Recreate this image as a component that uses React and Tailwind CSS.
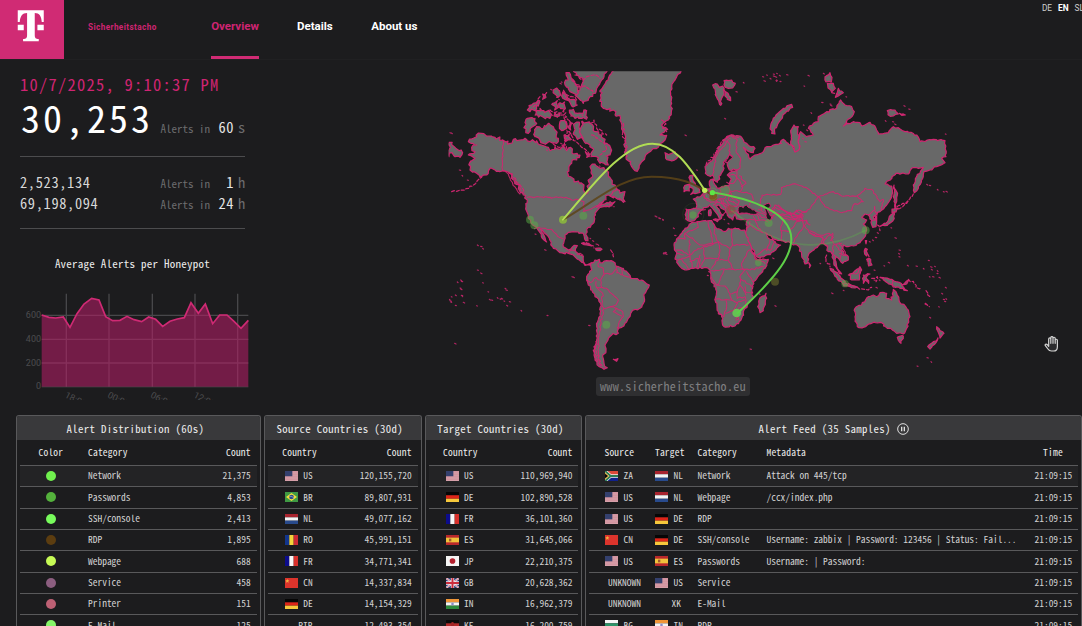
import React from "react";

/* ---------- world map geometry ---------- */
/* Points are kept in survey tiles; each tile has an offset on the shared sheet. */
const TILES = { A: [0, 0], B: [480, 0], C: [720, 195], E: [990, 0], F: [0, 420], G: [630, 420], H: [1080, 420] };

function points(src) {
  const out = [];
  let off = TILES.A;
  src.trim().split(/\s+/).forEach((tok) => {
    if (TILES[tok]) off = TILES[tok];
    else {
      const [x, y] = tok.split(",").map(Number);
      out.push([x + off[0], y + off[1]]);
    }
  });
  return out;
}

function noise(n) {
  const s = Math.sin(n * 127.1 + 11.7) * 43758.5453;
  return s - Math.floor(s) - 0.5;
}

function outline(src, closed, rough) {
  const pts = points(src);
  const n = pts.length;
  const res = [];
  for (let i = 0; i < n; i++) {
    const p = pts[i];
    res.push(p);
    if (i === n - 1 && !closed) break;
    const q = pts[(i + 1) % n];
    const len = Math.hypot(q[0] - p[0], q[1] - p[1]);
    const steps = Math.floor(len / 6);
    // the arctic coast of America is far more broken than the rest
    const r = closed && p[0] < 560 && p[1] < 440 && p[1] > 60 ? rough * 1.7 : rough;
    for (let k = 1; k < steps; k++) {
      const t = k / steps;
      const a = noise(p[0] * 3.1 + p[1] * 1.7 + k * 5.3) * r;
      const b = noise(q[0] * 2.3 + q[1] * 4.1 + k * 9.7) * r;
      res.push([p[0] + (q[0] - p[0]) * t + a, p[1] + (q[1] - p[1]) * t + b]);
    }
  }
  return "M" + res.map((p) => p[0].toFixed(1) + " " + p[1].toFixed(1)).join("L") + (closed ? "Z" : "");
}

const LAND = [
  // North and Central America
  "A 85,245 100,235 125,220 145,228 165,232 188,240 210,250 220,238 240,240 255,235 270,245 290,242 300,255 325,262 330,272 345,260 360,268 372,256 380,272 392,262 400,282 420,285 410,300 395,310 382,335 385,345 410,365 432,375 435,402 446,390 445,360 458,345 450,320 465,312 480,325 495,330 505,345 515,360 525,375 530,385 545,400 555,425 540,420 528,405 505,405 492,420 470,442 500,428 525,425 515,435 500,438 F 480,22 465,40 460,70 440,88 437,102 444,122 437,122 430,100 400,95 375,105 370,140 385,150 398,140 412,137 406,152 420,165 430,168 430,185 440,195 455,188 452,196 435,196 418,180 400,165 385,160 360,158 340,145 325,110 302,88 320,126 312,120 294,90 283,78 265,55 258,20 262,0 A 250,405 235,385 225,360 210,340 190,332 165,330 150,325 140,345 120,352 110,340 90,330 88,310 105,295 85,285 105,275 95,262 110,255",
  // South America
  "F 440,230 455,210 452,190 465,180 478,178 480,188 500,182 520,185 530,200 550,205 565,220 572,235 605,240 628,255 615,280 610,310 600,325 575,335 570,350 555,370 545,382 532,382 535,400 515,405 505,415 495,435 498,455 488,470 492,490 502,503 492,508 478,500 465,480 462,450 470,420 470,380 480,340 482,310 465,290 445,255 440,240",
  // Greenland
  "B 45,25 20,62 0,95 5,125 10,145 40,150 62,175 70,215 75,250 78,290 95,320 112,334 122,310 135,290 155,270 175,262 195,240 200,226 180,225 203,208 185,195 205,180 215,150 212,100 215,80 225,60 245,25",
  // Canadian arctic
  "A 400,25 505,25 485,60 470,85 450,110 430,130 405,105 420,90 430,60 410,45",
  "A 378,38 388,38 400,60 415,80 410,105 390,95 375,75 385,60",
  "A 425,185 450,190 465,215 485,225 500,250 515,270 510,285 498,288 505,315 480,310 470,290 455,290 460,270 450,255 430,240 422,225",
  "A 405,190 418,186 420,210 430,235 412,238 402,215",
  "A 290,200 310,205 325,190 340,200 355,235 350,250 330,245 310,250 285,230",
  "A 258,178 285,175 290,190 265,220 255,205",
  "A 262,150 280,130 298,122 290,145 270,155",
  "A 285,165 300,145 312,152 330,158 330,175 310,172",
  "A 388,150 400,148 412,160 440,152 442,172 405,175 392,168",
  "A 340,90 350,84 362,105 350,112", "A 368,98 380,104 378,120 368,115",
  "A 338,130 352,122 356,142 344,150", "A 360,128 374,126 374,148 362,146",
  "A 360,185 375,182 380,205 365,212 358,198", "A 388,182 398,190 392,210 384,200",
  "A 380,120 400,118 412,135 395,138", "A 308,102 320,98 318,112 308,118",
  "A 345,158 360,160 358,168 342,168", "A 372,225 388,222 390,240 376,245", "A 436,275 448,282 440,292",
  "A 510,408 530,388 540,400 555,395 553,424 535,418",
  // Chukotka across the antimeridian
  "A 27,247 45,262 68,278 60,292 45,290 36,278 27,290",
  // Iceland, Britain, Ireland
  "B 195,278 206,284 225,275 235,290 215,303 197,295",
  "C 30,152 40,150 38,162 46,180 58,192 60,202 45,206 32,208 40,196 28,180",
  "C 14,182 26,178 28,198 12,200",
  // Eurasia
  "B 400,225 425,232 440,250 465,265 460,278 440,270 430,262 440,280 450,297 465,285 490,275 500,260 520,255 545,250 E 30,250 40,238 65,255 75,275 88,265 85,240 92,215 110,230 130,225 115,205 130,190 145,185 145,170 170,155 200,145 212,120 225,135 245,140 253,155 240,175 220,198 250,185 270,188 275,198 300,187 318,205 325,222 355,218 370,200 385,203 405,215 440,225 450,245 490,238 525,242 528,290 515,295 525,308 500,320 480,330 462,335 458,355 445,385 433,398 430,375 440,350 460,322 445,325 425,325 415,342 378,340 345,372 365,378 365,410 350,435 330,455 310,470 318,480 H 225,45 230,60 228,80 218,82 215,60 205,45 195,42 185,52 200,60 190,72 200,90 195,110 180,128 160,138 140,140 130,135 125,150 145,170 145,180 128,190 118,178 108,170 105,180 112,205 125,222 118,220 102,195 98,165 92,155 85,155 78,135 65,130 45,145 25,165 22,190 15,192 5,165 G 445,138 430,135 420,128 395,122 375,118 355,105 345,98 360,118 375,125 392,135 370,155 330,175 320,170 300,130 285,100 290,90 C 202,285 170,282 165,265 158,285 148,278 138,262 122,248 118,240 108,242 120,260 130,270 118,284 112,268 98,250 88,240 70,248 58,262 55,275 45,285 25,288 17,282 18,252 48,250 48,230 40,222 58,216 68,208 76,196 90,192 88,170 98,162 104,178 118,190 135,182 148,180 154,162 142,150 150,142 172,135 160,132 148,135 142,120 146,105 158,95 150,88 142,100 130,112 132,130 122,150 112,172 102,165 98,150 86,152 76,145 75,125 88,112 105,92 118,65 130,45 148,32",
  // Africa, Madagascar
  "G 125,68 150,65 185,62 195,80 225,95 235,85 285,90 290,110 305,145 320,180 355,178 345,205 310,245 305,270 310,290 285,325 275,355 255,378 222,380 215,350 205,335 195,300 200,275 182,235 180,210 165,202 130,205 110,210 90,200 75,175 80,160 72,135 90,105 105,85",
  "G 348,280 350,295 340,332 330,338 323,320 328,298",
  // Arctic Russia and Svalbard
  "B 338,75 352,72 358,82 368,78 372,95 365,115 362,136 350,112",
  "B 372,62 395,60 406,70 398,84 385,85 372,74", "B 370,90 384,100 392,122 382,118",
  "E 65,133 68,142 45,160 28,185 14,205 15,222 5,220 2,198 18,165 40,145",
  "E 72,195 85,200 86,235 88,268 75,276 62,245 62,212",
  "E 165,50 180,38 186,52 184,66 168,66", "E 172,70 190,70 196,85 185,96 174,84",
  "E 205,85 220,98 205,108 196,112", "E 352,152 375,150 385,162 370,168 354,164", "E 388,160 406,165 395,166",
  // Sakhalin and Japan
  "E 372,375 382,405 375,445 370,410", "E 366,447 385,445 378,456 366,458",
  "H 283,35 280,60 262,76 240,79 262,66 272,45",
  // South-east Asia
  "H 90,205 100,208 120,228 136,246 132,256 112,238", "H 130,251 150,254 172,261 165,264 132,258",
  "H 145,225 160,218 180,200 185,210 178,240 155,240", "H 190,225 210,222 198,232 206,250 196,240 190,250",
  "H 240,232 275,238 300,248 322,272 300,265 285,262 262,248", "H 196,145 202,148 200,168 194,162",
  "H 200,178 212,178 216,195 206,198", "H 196,122 200,122 198,132", "G 476,188 482,196 478,203",
  "H 305,255 320,243 326,240 320,252",
  // Australia, Tasmania, New Zealand
  "H 165,325 185,315 205,290 220,285 230,290 240,278 260,280 258,295 275,300 280,268 288,275 298,305 320,325 330,350 320,385 310,402 290,400 272,385 262,385 245,368 215,370 190,382 172,380 165,350",
  "H 292,412 310,408 303,430", "H 410,380 420,392 432,400 420,414 416,400", "H 414,414 408,428 390,447 383,440 400,425",
  // Mediterranean and Caribbean islands
  "C 100,284 116,284 112,290", "C 86,256 92,254 92,272 86,272", "F 425,130 445,130 455,138 440,135", "F 467,145 486,148 480,152 468,150",
  "F 520,478 534,476 530,484",
];

const SEAS = [
  "C 174,256 178,244 190,248 200,240 212,250 236,262 228,268 200,264 178,266",
  "C 252,240 268,234 272,244 262,254 275,276 270,288 260,280 258,262",
  "C 148,90 158,96 144,112 136,112",
];

const BORDERS = [
  "A 188,240 188,332 205,342 218,372 240,402", "A 262,412 378,412 395,420 420,418 432,425 430,455 F 462,22 490,5",
  "F 283,86 302,84 335,88 352,108 370,116", "F 385,160 392,150 404,152", "F 412,164 420,160 428,165",
  "F 478,182 475,200 490,205 492,225 482,240 485,262 470,262 468,245", "F 440,240 452,248 468,232 478,240",
  "F 492,222 515,222 528,208", "F 530,200 530,218 570,232", "F 545,205 547,222",
  "F 485,262 505,270 520,285 535,300 528,315 512,320 492,326 486,310 488,280 470,262",
  "F 512,320 530,325 548,335 550,350 538,365 535,380", "F 492,326 485,350 478,400 474,450 478,488",
  "F 530,325 520,335 545,348",
  // Europe
  "C 150,40 138,55 120,75 108,95 104,120 98,148", "C 158,38 172,45 168,75 182,105 180,130 168,136",
  "C 130,46 145,52 150,60 148,90", "C 170,136 170,160 160,175 140,172", "C 146,152 165,150 178,165 188,185 178,200 150,198 145,182",
  "C 118,190 122,205 98,200 90,212 108,225 135,220 150,200", "C 96,195 78,205 72,218 92,232 112,230 100,240",
  "C 150,200 155,218 178,228 170,244 150,240 138,225", "C 108,226 130,238 150,258 160,262", "C 50,252 62,254 76,254",
  "C 180,200 205,205 215,208 220,225 208,240", "C 132,240 138,253 130,268", "C 26,256 25,284",
  "C 184,185 198,175 178,152", "C 118,222 125,235 145,240 150,252", "C 140,205 150,212 145,225 160,232", "C 120,210 138,212 148,205",
  "C 66,208 75,220 90,225", "C 88,192 86,208", "C 146,240 150,262 165,258 172,258", "C 160,230 175,240", "C 130,225 130,238",
  // Middle and Central Asia
  "C 245,255 240,238 246,210 280,208 302,208 304,188 345,176 E 108,382 145,410 110,455 70,470 40,450 15,435 0,460",
  "E 145,410 190,395 215,408 262,408 280,425 250,435 245,452 215,458 180,448 165,440 145,410", "E 262,408 285,385 305,388 330,425 340,418 335,450",
  "E 110,455 85,450 68,462 95,472 H 0,45 15,80 30,100 60,110 72,120 98,100", "E 0,478 20,460 55,470 80,480",
  "C 172,262 180,268 205,266 230,268 240,285 262,290", "G 300,65 290,90", "G 310,50 320,70 338,98", "G 300,75 320,90 340,98",
  "C 232,262 245,265 258,272", "C 235,268 245,278 256,276", "C 202,285 225,285 240,285", "C 275,255 300,270 330,262 340,280 370,275",
  "G 322,165 340,150 365,148 375,125", "G 350,152 360,120", "G 325,28 345,38", "G 362,48 385,42 400,55 392,90 395,122",
  "G 400,55 430,60 445,50 430,40 400,30 375,22 365,40", "G 395,92 420,95 440,65 455,60", "G 430,128 440,110 455,90 470,60",
  "G 425,42 440,30 460,45 440,62", "G 385,15 400,30 425,45", "G 440,60 470,62 480,75",
  "H 30,98 45,108 68,112 66,130", "H 72,120 70,130 82,140", "H 98,100 95,120 105,135 125,130", "H 100,135 98,160 108,170",
  "H 108,132 125,160 120,178", "H 118,128 132,150 142,168", "H 118,160 138,166", "H 278,240 280,262", "H 148,222 168,222 182,205",
  "H 30,92 50,102 70,106", "H 72,105 88,100 100,112 92,122", "H 205,45 225,30", "H 216,62 228,60",
  // Africa
  "G 105,100 145,82 142,66", "G 85,115 105,118 105,100 150,135 188,132 180,90 175,65", "G 78,150 90,150 120,165 118,120",
  "G 120,165 140,150 165,140 190,132", "G 188,132 205,125 240,145 240,170", "G 195,80 192,100 205,125", "G 245,88 248,135 295,135",
  "G 240,145 248,135", "G 240,165 235,180 250,208 280,208 275,190 298,150", "G 280,208 300,210 340,200", "G 300,150 325,180 345,190",
  "G 160,145 165,175 150,200", "G 165,175 205,175 210,150 205,125", "G 205,175 185,205", "G 210,180 235,180", "G 185,212 225,208 250,208",
  "G 222,210 210,240 200,255 185,232", "G 200,255 225,258 240,282 245,300 222,300 195,298", "G 240,282 262,275 270,255 272,225 285,210",
  "G 272,238 310,260", "G 270,255 285,275 308,278", "G 262,275 262,295 285,290 290,320", "G 245,300 262,308 285,300",
  "G 228,302 228,330 222,350 205,340", "G 228,340 250,332 262,310", "G 265,325 285,320", "G 75,178 95,178 115,208", "G 95,175 120,168 128,205",
  "G 120,185 145,175 140,203", "G 150,165 150,200", "G 80,160 100,165", "G 290,215 308,245", "G 285,260 288,285", "G 258,355 264,350 266,358 258,360",
];

/* Chains of small islands */
const CHAINS = [
  "A 35,395 50,394 62,390 78,386 90,378 105,372 112,362 125,352", "A 208,340 216,350 222,362 232,372 240,385 248,398", "A 214,342 226,355 230,368 242,378 252,400",
  "F 462,440 464,460 472,480 484,498", "F 468,425 468,450 474,475 490,500", "F 425,130 440,128 452,135 462,144", "F 512,150 520,160 522,175",
  "E 185,98 205,104", "H 325,238 342,250 360,266", "H 378,272 392,292", "H 195,150 208,172 200,185", "H 80,165 78,185 90,200",
  "H 172,262 195,268 215,262", "H 215,235 232,230 228,245", "H 292,20 308,10 325,2", "E 385,447 410,430 430,402", "H 232,75 240,92",
  "H 145,250 160,258", "A 405,45 430,60 440,50 460,45 480,55", "A 395,60 410,75 440,82 460,100", "A 380,115 370,90 390,110 410,120",
  "A 372,150 376,180 382,215 374,240 380,265", "A 330,150 350,155 372,165 385,180", "A 450,190 462,180 470,205 500,225", "A 300,110 290,130 275,145",
  "A 388,215 400,235 425,262 450,290", "A 340,252 360,262 375,255", "A 455,225 485,245 500,270 480,285",
  "B 185,180 198,192 188,205 200,215", "B 70,190 68,220 78,250 76,280", "F 495,20 510,14 522,20", "H 224,20 232,45 225,60",
  "H 376,310 388,320", "B 380,235 395,228 415,232", "C 78,120 92,105 110,80 122,55 140,36",
];

const SPECKS =
  "A 30,218 34,219 58,330 66,346 82,360 360,70 364,66 312,112 385,215 320,270 372,262 362,250 478,318 436,150 425,165 350,170 335,165 332,88 356,118 F 112,135 122,139 128,145 112,210 122,219 128,248 62,240 64,244 52,246 60,264 62,267 144,275 195,265 198,270 28,298 32,306 30,302 34,290 46,285 64,286 66,288 46,316 70,307 110,317 148,298 154,300 172,293 180,297 184,295 192,303 200,316 208,305 243,331 321,346 44,430 396,230 400,231 446,376 506,86 648,50 656,54 668,60 672,158 677,162 676,157 285,102 314,149 450,115 458,122 468,132 474,134 525,478 B 255,225 290,330 374,175 408,95 430,67 488,50 492,62 500,45 510,55 520,48 530,60 E 10,42 16,50 20,40 28,46 50,44 18,62 30,64 114,46 102,78 160,40 155,127 123,158 180,132 182,136 228,110 402,137 416,147 346,182 368,185 374,192 526,222 470,373 478,376 502,388 520,395 528,394 100,195 110,210 105,245 98,235 G 15,48 28,54 38,58 70,84 74,106 40,160 46,157 368,174 328,282 375,317 300,447 176,214 172,226 150,40 222,58 234,70 H 297,150 296,160 297,170 285,113 273,83 232,98 226,112 218,120 208,125 265,187 252,197 322,196 348,198 370,205 385,181 392,200 404,199 394,208 398,230 412,212 411,220 417,232 388,230 436,262 430,298 438,296 434,304 375,312 416,320 389,352 381,473 393,485 351,498 95,279 130,271 425,280 222,240 238,240 222,210 228,262 60,190";

function speckPath() {
  return points(SPECKS)
    .map(([x, y], i) => `M${x} ${y}l${(2 + (i % 3)).toFixed(0)} ${(i % 2) + 1}`)
    .join("");
}

function WorldMap() {
  return (
    <svg viewBox="0 0 1560 1020" className="h-[340px] w-[520px] shrink-0" fill="none">
      <defs>
        <clipPath id="sheet">
          <rect x="26" y="34" width="1520" height="980" />
        </clipPath>
      </defs>
      <g clipPath="url(#sheet)" strokeLinejoin="round" strokeLinecap="round" stroke="#cf2670">
        {LAND.map((d, i) => (
          <path key={i} d={outline(d, true, 6)} fill="#686868" strokeWidth="3.6" />
        ))}
        {BORDERS.map((d, i) => (
          <path key={i} d={outline(d, false, 5)} strokeWidth="3.3" strokeOpacity=".9" />
        ))}
        {SEAS.map((d, i) => (
          <path key={i} d={outline(d, true, 4)} fill="#1c1c1e" strokeWidth="3" />
        ))}
        {CHAINS.map((d, i) => (
          <path key={i} d={outline(d, false, 9)} strokeWidth="3.6" strokeDasharray="9 6" />
        ))}
        <path d={speckPath()} strokeWidth="3.6" strokeOpacity=".85" />
      </g>
      <g fill="#58b044" fillOpacity=".5">
        <circle cx="270" cy="479" r="12" />
        <circle cx="283" cy="496" r="12" />
        <circle cx="430" cy="467" r="12" />
        <circle cx="499" cy="794" r="12" />
        <circle cx="759" cy="465" r="11" />
        <circle cx="986" cy="489" r="12" />
        <circle cx="955" cy="608" r="10" />
        <circle cx="1277" cy="511" r="12" />
        <circle cx="1215" cy="671" r="11" />
        <circle cx="855" cy="390" r="16" fillOpacity=".3" />
        <circle cx="873" cy="450" r="14" fill="#8a4a3a" fillOpacity=".5" />
        <circle cx="1005" cy="665" r="12" fill="#62622a" fillOpacity=".7" />
        <circle cx="890" cy="759" r="13" fill="#62e84a" fillOpacity=".7" />
        <circle cx="369" cy="479" r="12" fill="#8fc038" fillOpacity=".8" />
        <circle cx="820" cy="410" r="12" fill="#7c5a1c" fillOpacity=".9" />
        <circle cx="816" cy="402" r="18" fill="none" stroke="#62c04a" strokeOpacity=".4" strokeWidth="2" />
        <circle cx="760" cy="462" r="32" fill="none" stroke="#58c044" strokeOpacity=".15" strokeWidth="2" />
      </g>
      <path d="M369 479C470 420 545 350 635 350S760 370 820 407" stroke="#5d4418" strokeOpacity=".85" strokeWidth="6" />
      <path d="M873 450C960 520 1090 610 1277 511" stroke="#58c044" strokeOpacity=".3" strokeWidth="5" />
      <path d="M369 479C470 360 555 251 637 251C705 251 750 325 794 390" stroke="#b0dc54" strokeWidth="6" strokeLinecap="round" />
      <path d="M818 397C905 412 1054 447 1054 538C1054 595 1000 660 892 760" stroke="#5ed048" strokeWidth="6" strokeLinecap="round" />
      <circle cx="794" cy="391" r="8" fill="#c0f058" />
      <circle cx="817" cy="398" r="8" fill="#5ee646" />
    </svg>
  );
}

/* ---------- honeypot chart ---------- */
const SERIES =
  "125,225 147,232 167,234 190,231 210,262 231,221 252,192 275,175 297,180 317,230 338,242 360,241 381,229 402,239 425,245 446,231 467,238 488,259 510,244 532,237 553,233 573,188 595,220 616,192 638,251 659,225 681,225 702,244 723,265 745,241";

function HoneypotChart() {
  return (
    <svg viewBox="60 150 690 329" className="block h-[109.670px] w-[230px]" fill="none">
      <g stroke="#47474a" strokeWidth="4">
        <path d="M125 226H745M125 298H745M125 369H745M199 161V441M327 161V441M457 161V441M585 161V441M713 161V441" />
      </g>
      <polygon points={`125,441 ${SERIES} 745,441`} fill="#b81c68" fillOpacity=".56" />
      <path d="M125 441H745" stroke="#47474a" strokeWidth="2" />
      <polyline points={SERIES} stroke="#cf2a74" strokeWidth="5" />
      <g fill="#4c4c4f" fontSize="27" className="font-[Roboto,sans-serif]">
        <text x="123" y="234" textAnchor="end">600</text>
        <text x="123" y="306" textAnchor="end">400</text>
        <text x="123" y="377" textAnchor="end">200</text>
        <text x="123" y="448" textAnchor="end">0</text>
        <text transform="translate(193 471) rotate(27)">18:00</text>
        <text transform="translate(321 471) rotate(27)">00:00</text>
        <text transform="translate(450 471) rotate(27)">06:00</text>
        <text transform="translate(579 471) rotate(27)">12:00</text>
      </g>
    </svg>
  );
}

/* ---------- flags ---------- */
const H3 = (a, b, c) => (
  <>
    <path fill={a} d="M0 0h39v10H0z" />
    <path fill={b} d="M0 10h39v10H0z" />
    <path fill={c} d="M0 20h39v10H0z" />
  </>
);
const V3 = (a, b, c) => (
  <>
    <path fill={a} d="M0 0h13v30H0z" />
    <path fill={b} d="M13 0h13v30H13z" />
    <path fill={c} d="M26 0h13v30H26z" />
  </>
);
const FLAGS = {
  US: (
    <>
      <path fill="#d8a2ac" d="M0 0h39v30H0z" />
      <path stroke="#c8808c" strokeWidth="1.4" d="M0 1h39M0 6h39M0 11h39M0 16h39M0 21h39M0 26h39" />
      <path fill="#34406e" d="M0 0h22v16H0z" />
    </>
  ),
  BR: (
    <>
      <path fill="#3f9a44" d="M0 0h39v30H0z" />
      <path fill="#f2dc3c" d="M19.500 3L36 15L19.500 27L3 15z" />
      <circle cx="19.500" cy="15" r="7" fill="#2a4a8c" />
      <path d="M13 13q8-1 13 4" stroke="#c8d4e0" strokeWidth="1.500" fill="none" />
    </>
  ),
  NL: H3("#a8242f", "#f4f4f4", "#284a8c"),
  RO: V3("#12358c", "#f2d43c", "#cc2b34"),
  FR: V3("#0c0c8c", "#f6f6f6", "#d8302c"),
  DE: H3("#060606", "#de2418", "#f6c83c"),
  CN: (
    <>
      <path fill="#dc342c" d="M0 0h39v30H0z" />
      <path fill="#f0b040" d="M7 3l2 4h4l-3 3 1 4-4-2-4 2 1-4-3-3h4z" />
    </>
  ),
  ES: (
    <>
      <path fill="#b8282c" d="M0 0h39v30H0z" />
      <path fill="#efc23c" d="M0 8h39v14H0z" />
      <path fill="#a05a30" d="M9 11h7v8H9z" />
    </>
  ),
  JP: (
    <>
      <path fill="#f4f4f4" d="M0 0h39v30H0z" />
      <circle cx="19.500" cy="15" r="8.500" fill="#b4202e" />
    </>
  ),
  GB: (
    <>
      <path fill="#2c3a74" d="M0 0h39v30H0z" />
      <path stroke="#ece8f0" strokeWidth="6" d="M0 0L39 30M39 0L0 30" />
      <path stroke="#c83848" strokeWidth="2" d="M0 0L39 30M39 0L0 30" />
      <path stroke="#f4f0f4" strokeWidth="10" d="M19.500 0V30M0 15H39" />
      <path stroke="#cc2c3c" strokeWidth="6" d="M19.500 0V30M0 15H39" />
    </>
  ),
  IN: (
    <>
      {H3("#f09638", "#f4f4f4", "#2c8a3c")}
      <circle cx="19.500" cy="15" r="4" fill="#8c8cc8" />
    </>
  ),
  KE: (
    <>
      {H3("#0a0a0a", "#b42828", "#1c6c34")}
      <ellipse cx="19.500" cy="15" rx="5" ry="9" fill="#a02424" />
    </>
  ),
  BG: H3("#f4f4f4", "#2c9468", "#cc3030"),
  ZA: (
    <>
      <path fill="#dc4a38" d="M0 0h39v15H0z" />
      <path fill="#10208c" d="M0 15h39v15H0z" />
      <path stroke="#f0f0f0" strokeWidth="10" d="M0 0L17 15L0 30M17 15H39" />
      <path stroke="#2c7c54" strokeWidth="6" d="M0 0L17 15L0 30M17 15H39" />
      <path fill="#e0b040" d="M0 4L13 15L0 26z" />
      <path fill="#080808" d="M0 8L9 15L0 22z" />
    </>
  ),
};

function Country({ code }) {
  const flag = FLAGS[code];
  if (!flag) {
    return <span className={code === "UNKNOWN" ? "pl-[3px]" : code === "XK" ? "pl-[16.500px]" : "pl-[13.500px]"}>{code}</span>;
  }
  return (
    <span className="flex items-center gap-[5.500px]">
      <svg viewBox="0 0 39 30" className="h-[10px] w-[13px] overflow-hidden" fill="none">
        {flag}
      </svg>
      {code}
    </span>
  );
}

/* ---------- tables ---------- */
function Panel({ title, className, titleClass = "pr-[6px]", children }) {
  return (
    <section className={`flex flex-col overflow-hidden rounded-t-[3px] border border-b-0 border-[#59595b] ${className}`}>
      <h2 className={`flex h-[24px] shrink-0 items-center justify-center gap-[6px] bg-[#39393b] pt-px text-[10.800px] font-medium tracking-[0.350px] text-[#ececec] ${titleClass}`}>
        {title}
      </h2>
      <div className="px-[3px]">{children}</div>
    </section>
  );
}

const ROW = "grid h-[21.330px] items-center border-t border-[#59595b] text-[9.450px] text-[#d2d2d2]";
const HEAD = "grid h-[25px] items-center text-[9.500px] tracking-[0.200px] text-[#ececec]";

const DISTRIBUTION = [
  ["#70f04e", "Network", "21,375"],
  ["#54b13c", "Passwords", "4,853"],
  ["#78fb5c", "SSH/console", "2,413"],
  ["#5c3d10", "RDP", "1,895"],
  ["#c6fa55", "Webpage", "688"],
  ["#8c5e80", "Service", "458"],
  ["#bd6074", "Printer", "151"],
  ["#86f668", "E-Mail", "125"],
];
const SOURCES = [
  ["US", "120,155,720"], ["BR", "89,807,931"], ["NL", "49,077,162"], ["RO", "45,991,151"],
  ["FR", "34,771,341"], ["CN", "14,337,834"], ["DE", "14,154,329"], ["PIR", "12,493,354"],
];
const TARGETS = [
  ["US", "110,969,940"], ["DE", "102,890,528"], ["FR", "36,101,360"], ["ES", "31,645,066"],
  ["JP", "22,210,375"], ["GB", "20,628,362"], ["IN", "16,962,379"], ["KE", "16,200,759"],
];
const FEED = [
  ["ZA", "NL", "Network", "Attack on 445/tcp"],
  ["US", "NL", "Webpage", "/ccx/index.php"],
  ["US", "DE", "RDP", ""],
  ["CN", "DE", "SSH/console", "Username: zabbix | Password: 123456 | Status: Fail..."],
  ["US", "ES", "Passwords", "Username: | Password:"],
  ["UNKNOWN", "US", "Service", ""],
  ["UNKNOWN", "XK", "E-Mail", ""],
  ["BG", "IN", "RDP", ""],
];

function CountryTable({ title, rows }) {
  return (
    <Panel title={title} className="w-[158px]">
      <div className={`${HEAD} grid-cols-[1fr_auto] pl-[14.500px] pr-[6px]`}>
        <span>Country</span>
        <span>Count</span>
      </div>
      {rows.map(([code, count], i) => (
        <div key={code} className={`${ROW} grid-cols-[1fr_auto] pl-[17px] pr-[6px] ${i === 0 ? "bg-[#232325]" : ""}`}>
          <Country code={code} />
          <span>{count}</span>
        </div>
      ))}
    </Panel>
  );
}

function Period({ value, unit }) {
  return (
    <span className="flex items-baseline text-[11px] text-[#6c6c6e]">
      Alerts in
      <b className="w-[24px] text-right text-[14.400px] font-normal tracking-[0.600px] text-[#e6e6e6]">{value}</b>
      <i className="ml-[4px] w-[7px] text-[14.400px] not-italic">{unit}</i>
    </span>
  );
}

export default function App() {
  return (
    <div className="relative flex h-[626px] w-[1082px] flex-col overflow-hidden bg-[#1c1c1e] font-['Noto_Sans_Mono_CJK_SC','DejaVu_Sans_Mono',monospace] leading-none whitespace-pre">
      <header className="flex h-[59px] shrink-0 font-[Roboto,sans-serif] font-bold">
        <div className="w-[63.500px] bg-[#d02b74]">
          <svg viewBox="0 0 190 177" className="h-[59px] w-[63.500px]" fill="#fff">
            <path d="M53 31H131V66H125C124 49 118 39 104 39V105C104 114 107 117 116 117V124H69V117C78 117 81 114 81 105V39C67 39 60 49 59 66H53Z" />
            <path d="M53 74h18v17H53zM112 74h19v17H112z" />
          </svg>
        </div>
        <div className="flex w-[147.500px] items-center pb-[5px] pl-[24.500px] text-[8.200px] tracking-[0.400px] text-[#cf2472]">Sicherheitstacho</div>
        <nav className="flex flex-1 text-[11.500px] text-white">
          <a className="flex w-[48px] items-center justify-center border-b-[3px] border-[#d02b74] pb-[3px] text-[#cf2472]">Overview</a>
          <a className="ml-[38px] flex items-center pb-[6px]">Details</a>
          <a className="ml-[38.500px] flex items-center pb-[6px]">About us</a>
        </nav>
        <div className="-mr-[2px] flex gap-[6px] pt-[4px] text-[8.300px] font-normal text-[#d0d0d0]">
          <span>DE</span>
          <span className="font-bold text-white">EN</span>
          <span>SL</span>
        </div>
      </header>

      <main className="flex h-[356px] shrink-0 border-t border-[#202022]">
        <aside className="w-[420px] pl-[20px]">
          <div className="mt-[15px] text-[16.500px] leading-[18px] tracking-[1.250px] text-[#cf2472]">10/7/2025, 9:10:37 PM</div>
          <div className="flex h-[49px] w-[225px] items-baseline justify-between">
            <span className="pl-px text-[38px] leading-[48px] tracking-[3px] text-white">30,253</span>
            <Period value="60" unit="s" />
          </div>
          <div className="mt-[14px] w-[225px] border-y border-[#4c4c4e] pt-[18px] pb-[12px]">
            <div className="flex h-[20.500px] items-baseline justify-between text-[14.400px] tracking-[0.650px] text-[#d8d8d8]">
              2,523,134
              <span className="tracking-normal">
                <Period value="1" unit="h" />
              </span>
            </div>
            <div className="flex h-[20.500px] items-baseline justify-between text-[14.400px] tracking-[0.650px] text-[#d8d8d8]">
              69,198,094
              <span className="tracking-normal">
                <Period value="24" unit="h" />
              </span>
            </div>
          </div>
          <h2 className="mt-[28.500px] h-[11.500px] w-[225px] text-center text-[11px] font-medium tracking-[0.250px] text-[#ececec]">
            Average Alerts per Honeypot
          </h2>
          <div className="mt-[21px]">
            <HoneypotChart />
          </div>
        </aside>
        <div className="relative -mt-px ml-[20px] h-[341px] w-[520px] pt-px">
          <WorldMap />
          <div className="absolute top-[318px] left-[156px] flex h-[19px] w-[154px] items-center justify-center rounded-[3px] bg-[#2f2f31] pb-px text-[12px] tracking-[0.350px] text-[#808082]">
            www.sicherheitstacho.eu
          </div>
        </div>
      </main>

      <div className="flex flex-1 gap-[3px] pl-[16px]">
        <Panel title="Alert Distribution (60s)" className="w-[245px]">
          <div className={`${HEAD} grid-cols-[49.500px_1fr_auto] pl-[18.500px] pr-[6px]`}>
            <span>Color</span>
            <span>Category</span>
            <span>Count</span>
          </div>
          {DISTRIBUTION.map(([color, name, count], i) => (
            <div key={name} className={`${ROW} grid-cols-[42px_1fr_auto] pl-[26px] pr-[6px] ${i === 0 ? "bg-[#232325]" : ""}`}>
              <span className="size-[10px] rounded-full" style={{ background: color }} />
              <span>{name}</span>
              <span>{count}</span>
            </div>
          ))}
        </Panel>
        <CountryTable title="Source Countries (30d)" rows={SOURCES} />
        <CountryTable title="Target Countries (30d)" rows={TARGETS} />
        <Panel
          className="w-[497px]"
          titleClass=""
          title={
            <>
              Alert Feed (35 Samples)
              <svg viewBox="0 0 36 36" className="size-[12px]" fill="none" stroke="#e0e0e0" strokeWidth="3">
                <circle cx="18" cy="18" r="16" />
                <path strokeWidth="4" d="M14 11v14M22 11v14" />
              </svg>
            </>
          }
        >
          <div className={`${HEAD} grid-cols-[50.500px_42.500px_69px_1fr_38px] pl-[15px] pr-[6px]`}>
            <span>Source</span>
            <span>Target</span>
            <span>Category</span>
            <span>Metadata</span>
            <span className="text-center">Time</span>
          </div>
          {FEED.map(([src, dst, cat, meta], i) => (
            <div key={i} className={`${ROW} grid-cols-[50px_42.500px_69px_1fr_38px] pl-[15.500px] pr-[5.500px] ${i === 0 ? "bg-[#232325]" : ""}`}>
              <Country code={src} />
              <Country code={dst} />
              <span>{cat}</span>
              <span>{meta}</span>
              <span>21:09:15</span>
            </div>
          ))}
        </Panel>
      </div>

      <svg viewBox="0 0 24 24" className="absolute top-[336px] left-[1044px] size-[16px]" fill="#2c2c2e" stroke="#d2d2d2" strokeWidth="1.800" strokeLinejoin="round" strokeLinecap="round">
        <path d="M7 13V4.500a1.600 1.600 0 0 1 3.200 0V11V2.500a1.600 1.600 0 0 1 3.300 0V11V3.500a1.600 1.600 0 0 1 3.300 0V11V6.500a1.600 1.600 0 0 1 3.300 0V16c0 4-2 6.500-6 6.500h-3c-2.500 0-4-1-5.200-3L2 14.500c-1-2 1.200-3.200 2.600-1.800L7 15.500z" />
      </svg>
    </div>
  );
}
